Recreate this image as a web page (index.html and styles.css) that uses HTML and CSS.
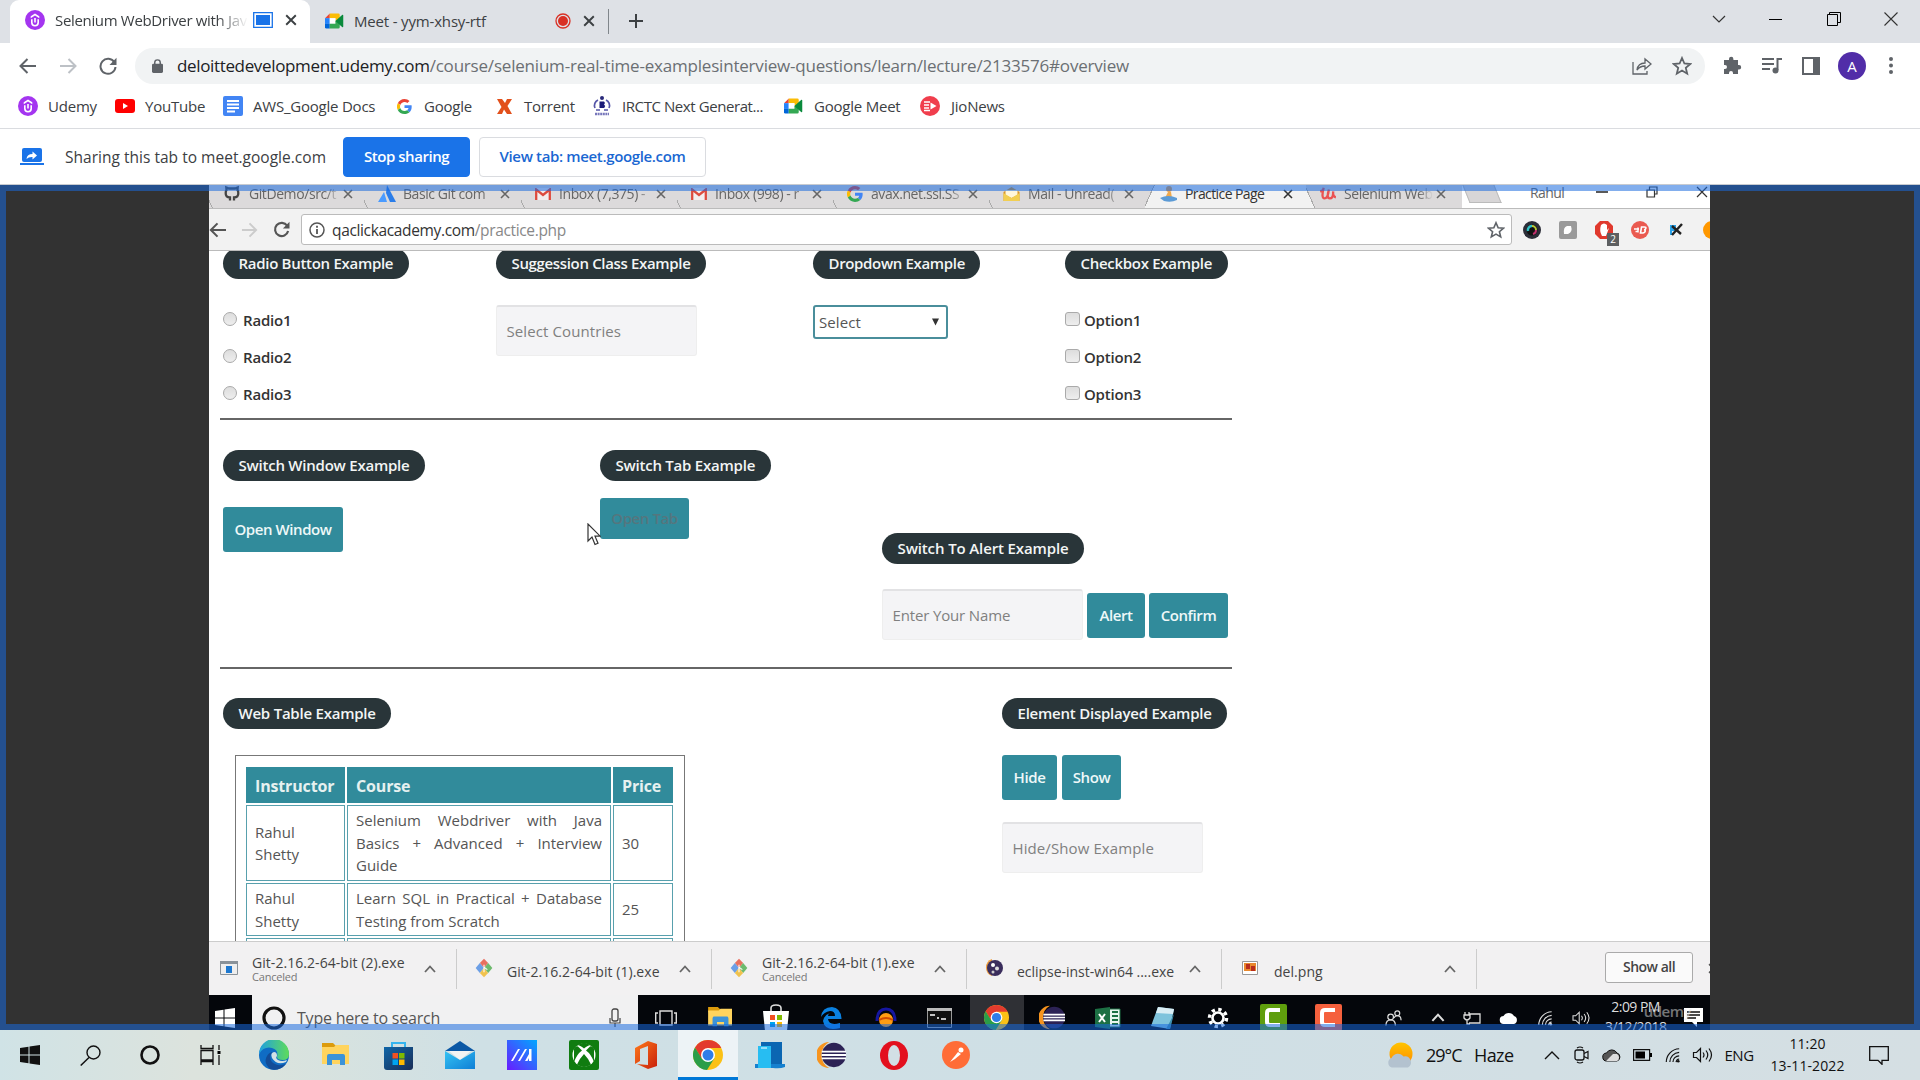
FILE: index.html
```html
<!DOCTYPE html>
<html lang="en">
<head>
<meta charset="utf-8">
<title>Selenium WebDriver with Java</title>
<link rel="stylesheet" href="styles.css">
</head>
<body>
<svg width="0" height="0" class="defs">
  <defs>
    <linearGradient id="gMail" x1="0" y1="0" x2="1" y2="1"><stop offset="0" stop-color="#35c3f3"/><stop offset="1" stop-color="#0f7fd6"/></linearGradient>
    <linearGradient id="gMy" x1="0" y1="1" x2="1" y2="0"><stop offset="0" stop-color="#6a1bff"/><stop offset="1" stop-color="#00a8ff"/></linearGradient>
    <linearGradient id="gEdge" x1="0" y1="0" x2="1" y2="0"><stop offset="0" stop-color="#1f9fe0"/><stop offset="1" stop-color="#5fdc5a"/></linearGradient>
    <linearGradient id="gStore" x1="0" y1="0" x2="1" y2="1"><stop offset="0" stop-color="#0f66a8"/><stop offset="1" stop-color="#1a2d56"/></linearGradient>
    <linearGradient id="gOff" x1="0" y1="0" x2="1" y2="1"><stop offset="0" stop-color="#ff7a1a"/><stop offset="1" stop-color="#c8200c"/></linearGradient>
    <linearGradient id="gSun" x1="0" y1="0" x2="0" y2="1"><stop offset="0" stop-color="#ffc400"/><stop offset="1" stop-color="#ff8a00"/></linearGradient>
  </defs>
  <symbol id="udemy" viewBox="0 0 20 20"><circle cx="10" cy="10" r="10" fill="#a435f0"/><path d="M5.700 6.200 10 3.500l4.300 2.700v2L10 5.600 5.700 8.200z" fill="#fff"/><path d="M6.800 9.200v3.300a3.200 3.200 0 0 0 6.400 0V9.200M10 8v4.500" fill="none" stroke="#fff" stroke-width="1.600"/></symbol>
  <symbol id="meet" viewBox="0 0 20 16"><path d="M0 5 5 0v5z" fill="#ea4335"/><path d="M5 0h9a1.500 1.500 0 0 1 1.500 1.500V6L11 8V5H5z" fill="#fbbc04"/><path d="M0 5h5v6H0z" fill="#2684fc"/><path d="M0 11h5v5H1.500A1.500 1.500 0 0 1 0 14.500z" fill="#0066da"/><path d="M5 5h6v6H5z" fill="#fff"/><path d="M5 11h6V8l4.500-2v8.500A1.500 1.500 0 0 1 14 16H5z" fill="#34a853"/><path d="M11 8l7-6.300c.5-.4 1.200-.2 1.200.5v11.600c0 .7-.7.9-1.200.5z" fill="#0a8a3c"/></symbol>
  <symbol id="cross" viewBox="0 0 10 10"><path d="M1 1l8 8M9 1 1 9" fill="none" stroke="currentColor" stroke-width="1.600"/></symbol>
  <symbol id="up" viewBox="0 0 12 8"><path d="M1 7l5-5.500L11 7" fill="none" stroke="currentColor" stroke-width="1.800"/></symbol>
  <symbol id="g" viewBox="0 0 48 48"><path fill="#EA4335" d="M24 9.500c3.500 0 6.700 1.200 9.200 3.600l6.900-6.900C35.900 2.400 30.500 0 24 0 14.600 0 6.500 5.400 2.600 13.200l8 6.200C12.400 13.700 17.700 9.500 24 9.500z"/><path fill="#4285F4" d="M47 24.600c0-1.600-.2-3.100-.4-4.600H24v9h12.900c-.6 3-2.300 5.500-4.800 7.200l7.700 6C44.400 38 47 32 47 24.600z"/><path fill="#FBBC05" d="M10.500 28.600a14.500 14.500 0 0 1 0-9.200l-8-6.200a24 24 0 0 0 0 21.600z"/><path fill="#34A853" d="M24 48c6.500 0 11.900-2.100 15.900-5.800l-7.700-6c-2.200 1.500-4.900 2.300-8.200 2.300-6.300 0-11.600-4.200-13.500-9.900l-8 6.200C6.500 42.600 14.600 48 24 48z"/></symbol>
  <symbol id="gmail" viewBox="0 0 16 12"><path d="M0 0h16v12H0z" fill="#f3eeee"/><path d="M1.200 12V1.500L8 7l6.800-5.500V12" fill="none" stroke="#dd4b3e" stroke-width="2.300"/></symbol>
  <symbol id="star" viewBox="0 0 20 20"><path d="M10 2l2.400 5.500 5.900.5-4.500 3.900 1.400 5.800L10 14.600l-5.200 3.100 1.400-5.800L1.700 8l5.900-.5z" fill="none" stroke="#5f6368" stroke-width="1.800"/></symbol>
  <symbol id="chrome" viewBox="0 0 30 30"><circle cx="15" cy="15" r="15" fill="#fbc116"/><path d="M15 0A15 15 0 0 0 2 7.500l6.500 11.200L15 8h13.300A15 15 0 0 0 15 0z" fill="#e33b2e"/><path d="M2 7.500A15 15 0 0 0 14 30l7.500-12L9 19z" fill="#2a9d48"/><circle cx="15" cy="15" r="7" fill="#fff"/><circle cx="15" cy="15" r="5.500" fill="#2f7de9"/></symbol>
  <symbol id="folder" viewBox="0 0 28 26"><path d="M0 1h11l3 3-2 3H0z" fill="#dc9b0c"/><path d="M0 5h12l2-2h13v19H0z" fill="#ffd45e"/><path d="M5 23v-9a2 2 0 0 1 2-2h14a2 2 0 0 1 2 2v9h-5v-5h-8v5z" fill="#3c93d8"/></symbol>
  <symbol id="eclipse" viewBox="0 0 30 30"><path d="M12 1a14 14 0 0 0 0 28A16 16 0 0 1 12 1z" fill="#f7941e"/><circle cx="17" cy="15" r="13" fill="#2c2255"/><path d="M4 11.500h26M4 15h26M4 18.500h26" stroke="#fff" stroke-width="1.900"/></symbol>
  <symbol id="win" viewBox="0 0 20 20"><path d="M0 3l8.500-1.200v7.700H0zM9.500 1.600 20 0v9.500H9.500zM0 10.500h8.500v7.700L0 17zM9.500 10.500H20V20L9.500 18.400z" fill="currentColor"/></symbol>
  <symbol id="wifi" viewBox="0 0 18 18"><path d="M2 17A15 15 0 0 1 16.500 2M6 17A11 11 0 0 1 16.500 6M9.500 17a7 7 0 0 1 7-7M13 17a4 4 0 0 1 3.500-3.500" fill="none" stroke="currentColor" stroke-width="1.300"/><circle cx="15.500" cy="16" r="1.500" fill="currentColor"/></symbol>
  <symbol id="vol" viewBox="0 0 20 18"><path d="M1 6.500h3l4-4v13l-4-4H1zM10.500 6.500q2 2.500 0 5M13.500 4.500q3.500 4.500 0 9M16.500 2.500q5 6.500 0 13" fill="none" stroke="currentColor" stroke-width="1.200"/></symbol>
  <symbol id="cloud" viewBox="0 0 20 14"><path d="M5 13a4 4 0 0 1-.5-8A6 6 0 0 1 15 5a4.200 4.200 0 0 1 0 8z" fill="currentColor"/></symbol>
  <symbol id="git" viewBox="0 0 20 24"><path d="M10 1l5 5-5 6-5-6z" fill="#e8705f"/><path d="M5 6l5 6-5 6-5-6z" fill="#6c9fe6"/><path d="M15 6l5 6-5 6-5-6z" fill="#6dba6d"/><path d="M10 12l5 6-5 5-5-5z" fill="#f0c24e"/><path d="M10 8v9M10 11l4 3" stroke="#fff" stroke-width="1.300"/></symbol>
  <symbol id="rec" viewBox="0 0 16 16"><circle cx="8" cy="8" r="7" fill="none" stroke="#d93025" stroke-width="1.300"/><circle cx="8" cy="8" r="5" fill="#d93025"/></symbol>
  <symbol id="people" viewBox="0 0 18 18"><circle cx="6" cy="8" r="3" fill="none" stroke="currentColor" stroke-width="1.300"/><circle cx="13" cy="4" r="2.600" fill="none" stroke="currentColor" stroke-width="1.300"/><path d="M1 17q0-6 5-6t5 6M9.500 9q1-2.500 3.500-2.500 4 0 4 5" fill="none" stroke="currentColor" stroke-width="1.300"/></symbol>
</svg>

<header class="tabstrip">
  <div class="tab active">
    <svg width="20" height="20"><use href="#udemy"/></svg>
    <span class="tab-title fade">Selenium WebDriver with Jav</span>
    <svg class="share-dot" width="20" height="16" viewBox="0 0 20 16"><path d="M.7.7h18.600v14.600H.7z" fill="#fff" stroke="#1a73e8" stroke-width="1.300"/><path d="M3 3h14v10H3z" fill="#1a73e8"/></svg>
    <svg class="x" width="12" height="12"><use href="#cross"/></svg>
  </div>
  <div class="tab">
    <svg width="19" height="16"><use href="#meet"/></svg>
    <span class="tab-title">Meet - yym-xhsy-rtf</span>
    <svg width="16" height="16"><use href="#rec"/></svg>
    <svg class="x" width="12" height="12"><use href="#cross"/></svg>
  </div>
  <svg class="plus" width="16" height="16" viewBox="0 0 16 16"><path d="M8 1v14M1 8h14" stroke="#3c4043" stroke-width="2"/></svg>
  <div class="winctl">
    <svg width="14" height="8" viewBox="0 0 14 8"><path d="M1 1l6 6 6-6" fill="none" stroke="#333" stroke-width="1.200"/></svg>
    <svg width="14" height="14" viewBox="0 0 14 14"><path d="M0 7.500h13" stroke="#000"/></svg>
    <svg width="14" height="14" viewBox="0 0 14 14"><path d="M.5 2.500h10v11H.5zM2.500 2.500v-2h11v10h-3" fill="none" stroke="#000"/></svg>
    <svg width="14" height="14" viewBox="0 0 14 14"><path d="M.5.5l13 13M13.500.5l-13 13" stroke="#333" stroke-width="1.100"/></svg>
  </div>
</header>

<nav class="toolbar">
  <svg width="18" height="16" viewBox="0 0 18 16"><path d="M17 8H2M8.500 1 1.500 8l7 7" fill="none" stroke="#5f6368" stroke-width="2"/></svg>
  <svg width="18" height="16" viewBox="0 0 18 16"><path d="M1 8h15M9.500 1l7 7-7 7" fill="none" stroke="#bdc1c6" stroke-width="2"/></svg>
  <svg width="18" height="18" viewBox="0 0 18 18"><path d="M15.500 5.500A7.500 7.500 0 1 0 16.500 10" fill="none" stroke="#5f6368" stroke-width="2"/><path d="M17.500.8V8h-7z" fill="#5f6368"/></svg>
  <div class="omnibox">
    <svg width="11" height="14" viewBox="0 0 12 15"><rect y="5" width="12" height="10" rx="1.500" fill="#5f6368"/><path d="M3 6V3.800a3 3 0 0 1 6 0V6" fill="none" stroke="#5f6368" stroke-width="1.600"/></svg>
    <span class="url"><b>deloittedevelopment.udemy.com</b><i>/course/selenium-real-time-examplesinterview-questions/learn/lecture/2133576#overview</i></span>
    <svg width="20" height="18" viewBox="0 0 20 18"><path d="M1 5v12h14v-3M5 13q1-7 8-7V2l6 5-6 5V9q-5 0-8 4z" fill="none" stroke="#5f6368" stroke-width="1.300"/></svg>
    <svg width="20" height="20"><use href="#star"/></svg>
  </div>
  <div class="actions">
    <svg width="19" height="19" viewBox="0 0 19 19"><path d="M1 4h5V3a2.200 2.200 0 0 1 4.400 0v1H15v5h1a2.200 2.200 0 0 1 0 4.400h-1V18h-5v-1a2 2 0 0 0-4 0v1H1v-5h1a2 2 0 0 0 0-4H1z" fill="#5f6368"/></svg>
    <svg width="20" height="17" viewBox="0 0 20 17"><path d="M0 2h12M0 7h12M0 12h8" stroke="#5f6368" stroke-width="2"/><path d="M15.500 13V2H20" fill="none" stroke="#5f6368" stroke-width="2"/><circle cx="13.500" cy="13.500" r="3" fill="#5f6368"/></svg>
    <svg width="18" height="18" viewBox="0 0 18 18"><path d="M1 1h16v16H1z" fill="#fff" stroke="#5f6368" stroke-width="2"/><path d="M11 1h6v16h-6z" fill="#5f6368"/></svg>
    <span class="avatar">A</span>
    <svg width="4" height="17" viewBox="0 0 4 17"><circle cx="2" cy="2" r="2" fill="#5f6368"/><circle cx="2" cy="8.500" r="2" fill="#5f6368"/><circle cx="2" cy="15" r="2" fill="#5f6368"/></svg>
  </div>
</nav>

<nav class="bookmarks">
  <a class="bm b1"><svg width="20" height="20"><use href="#udemy"/></svg>Udemy</a>
  <a class="bm b2"><svg width="20" height="14" viewBox="0 0 20 14"><rect width="20" height="14" rx="3" fill="#f00"/><path d="M8 4l5 3-5 3z" fill="#fff"/></svg>YouTube</a>
  <a class="bm b3"><svg width="20" height="20" viewBox="0 0 20 20"><rect width="20" height="20" rx="2" fill="#4285f4"/><path d="M4 5h12M4 8.500h12M4 12h12M4 15.500h8" stroke="#fff" stroke-width="1.800"/></svg>AWS_Google Docs</a>
  <a class="bm b4"><svg width="15" height="15"><use href="#g"/></svg>Google</a>
  <a class="bm b5"><svg width="15" height="15" viewBox="0 0 15 15"><path d="M0 0h5l3 4 2-4h5l-4.500 7L15 15h-5l-3-4.500L5 15H0l4.500-7z" fill="#e2501b"/></svg>Torrent</a>
  <a class="bm b6"><svg width="18" height="20" viewBox="0 0 18 20"><circle cx="9" cy="2" r="2" fill="#2a2a7a"/><path d="M5 4a6 6 0 0 0-3 8M13 4a6 6 0 0 1 3 8M3 14h4M11 14h4" fill="none" stroke="#5555a8" stroke-width="1.700"/><path d="M6.500 5.500h4.500l1 1.500-1 1.500 1.200 1.500-1 2H6.500z" fill="#1b1b78"/><path d="M2 18h14" stroke="#7777bb" stroke-width="2.600" stroke-dasharray="2 .6"/></svg>IRCTC Next Generat...</a>
  <a class="bm b7"><svg width="19" height="16"><use href="#meet"/></svg>Google Meet</a>
  <a class="bm b8"><svg width="20" height="20" viewBox="0 0 20 20"><circle cx="10" cy="10" r="10" fill="#f03e4d"/><path d="M4 6h6M4 9h5M4 12h5M4 14.500h6" stroke="#fff" stroke-width="1.500"/><path d="M10.500 6.500l6 3.500-6 3.500z" fill="#fff"/></svg>JioNews</a>
</nav>

<section class="infobar">
  <svg width="24" height="17" viewBox="0 0 24 17"><rect x="2" width="20" height="14" rx="2" fill="#1a73e8"/><path d="M0 15h24v2H0z" fill="#1a73e8"/><path d="M6.500 11q.5-5 6-5V3.500L17 7.500l-4.500 4V9q-4-.2-6 2z" fill="#fff"/></svg>
  <span class="share-text">Sharing this tab to meet.google.com</span>
  <span class="btn stop">Stop sharing</span>
  <span class="btn view">View tab: meet.google.com</span>
</section>

<main class="stage">
  <div class="video">
    <div class="vtabs">
      <div class="vtab t1"><svg width="18" height="18" viewBox="0 0 18 18"><path d="M7 15.500v-3q-4.500 0-4.300-4.500 0-2 .8-3L3.300 2.500l2.700 1h6l2.700-1-.2 2.500q.8 1 .8 3 .2 4.500-4.300 4.500v3" fill="none" stroke="#444" stroke-width="2.300"/></svg><span class="fade">GitDemo/src/t</span><svg width="10" height="10"><use href="#cross"/></svg></div>
      <div class="vtab t2"><svg width="18" height="18" viewBox="0 0 18 18"><path d="M9 0 18 17h-6L8 8z" fill="#2b7de9"/><path d="M6 7l3 10H0z" fill="#4a9bff"/></svg><span class="fade">Basic Git com</span><svg width="10" height="10"><use href="#cross"/></svg></div>
      <div class="vtab t3"><svg width="16" height="12"><use href="#gmail"/></svg><span class="fade">Inbox (7,375) -</span><svg width="10" height="10"><use href="#cross"/></svg></div>
      <div class="vtab t4"><svg width="16" height="12"><use href="#gmail"/></svg><span class="fade">Inbox (998) - r</span><svg width="10" height="10"><use href="#cross"/></svg></div>
      <div class="vtab t5"><svg width="16" height="16"><use href="#g"/></svg><span class="fade">avax.net.ssl.SS</span><svg width="10" height="10"><use href="#cross"/></svg></div>
      <div class="vtab t6"><svg width="17" height="16" viewBox="0 0 16 16"><path d="M0 6l8-5 8 5v9H0z" fill="#d9952a"/><path d="M2 4h12v5l-6 3-6-3z" fill="#fff7dc"/><path d="M0 7l8 5 8-5v8H0z" fill="#f2cf52"/></svg><span class="fade">Mail - Unread(</span><svg width="10" height="10"><use href="#cross"/></svg></div>
      <div class="vtab t7 on"><svg width="18" height="18" viewBox="0 0 18 18"><circle cx="9" cy="4" r="3" fill="#e8a04e"/><path d="M8 7h3l1 6H5z" fill="#efa94d"/><path d="M0 13q8-4 17 0v2q-6 3-13 1z" fill="#5c9bd6"/></svg><span>Practice Page</span><svg width="10" height="10"><use href="#cross"/></svg></div>
      <div class="vtab t8"><svg width="16" height="14" viewBox="0 0 18 16"><path d="M0 5q4-1 4-4-3 12 1 12t5-10q-3 10 1 10t4-8q-1 6 3 7" fill="none" stroke="#ea5252" stroke-width="2.600"/></svg><span class="fade">Selenium Web</span><svg width="10" height="10"><use href="#cross"/></svg></div>
      <div class="newtab"></div>
      <span class="user">Rahul</span>
      <div class="vwin">
        <svg width="12" height="12" viewBox="0 0 12 12"><path d="M0 6h12" stroke="#222" stroke-width="1.500"/></svg>
        <svg width="12" height="12" viewBox="0 0 12 12"><path d="M1 4h7.500v7H1zM3.500 4V1H11v7H8.500" fill="none" stroke="#333" stroke-width="1.200"/></svg>
        <svg width="12" height="12" viewBox="0 0 12 12"><path d="M1 1l10 10M11 1 1 11" stroke="#333" stroke-width="1.200"/></svg>
      </div>
    </div>
    <div class="vbar">
      <svg width="17" height="16" viewBox="0 0 18 16"><path d="M18 8H3M9 1 2 8l7 7" fill="none" stroke="#555" stroke-width="2.200"/></svg>
      <svg width="17" height="16" viewBox="0 0 18 16"><path d="M1 8h14M9 1l7 7-7 7" fill="none" stroke="#ccc" stroke-width="2"/></svg>
      <svg width="17" height="17" viewBox="0 0 18 18"><path d="M15 5A7 7 0 1 0 16 10.500" fill="none" stroke="#555" stroke-width="2.300"/><path d="M17.500.8V8h-7z" fill="#555"/></svg>
      <div class="vurl">
        <svg width="16" height="16" viewBox="0 0 16 16"><circle cx="8" cy="8" r="7" fill="none" stroke="#555" stroke-width="1.500"/><path d="M8 7v5M8 3.800v2" stroke="#555" stroke-width="1.800"/></svg>
        <span>qaclickacademy.com<i>/practice.php</i></span>
        <svg width="18" height="18"><use href="#star"/></svg>
      </div>
      <div class="exts">
        <svg width="18" height="18" viewBox="0 0 18 18"><circle cx="9" cy="9" r="9" fill="#2b2d38"/><circle cx="9" cy="9" r="5.500" fill="#111"/><path d="M5 10a4 4 0 0 1 4-5" stroke="#2fc4c9" stroke-width="2.500" fill="none"/><path d="M9 5a4 4 0 0 1 4 4" stroke="#b9c93a" stroke-width="2" fill="none"/><path d="M13 9a4 4 0 0 1-3 4" stroke="#c2306e" stroke-width="2" fill="none"/></svg>
        <svg width="18" height="18" viewBox="0 0 18 18"><rect width="18" height="18" rx="2" fill="#9a9a9a"/><path d="M5 13q-1-7 3-8h4q2 6-3 8z" fill="#fff"/></svg>
        <span class="ext"><svg width="18" height="18" viewBox="0 0 18 18"><path d="M5 0h8l5 5v8l-5 5H5l-5-5V5z" fill="#e0392d"/><path d="M6 4q3-3 6 0v5l2-2-3 8H7q-3-5-1-11z" fill="#fff"/></svg><em>2</em></span>
        <svg width="18" height="18" viewBox="0 0 18 18"><circle cx="9" cy="9" r="9" fill="#ea5a50"/><path d="M3 8h5M4.500 10.500h3M7 6.500v5" fill="none" stroke="#fff" stroke-width="1.500"/><path d="M10.500 6h3q1.800 0 1.300 1.500-.4 1.300-1.800 1.300 1.500.2 1.200 1.500T12 12H9.500z" fill="none" stroke="#fff" stroke-width="1.600"/></svg>
        <svg width="14" height="14" viewBox="0 0 14 14"><path d="M1 2h6v6H3v4H1z" fill="#29a3ea"/><path d="M3 3l9 8M13 1 3 12" stroke="#222" stroke-width="2.400"/></svg>
        <svg width="18" height="18" viewBox="0 0 18 18"><circle cx="9" cy="9" r="9" fill="#ff9800"/></svg>
      </div>
    </div>

    <div class="page">
      <section class="examples">
        <div><h3 class="pill">Radio Button Example</h3>
          <label class="opt"><s class="radio"></s>Radio1</label><label class="opt"><s class="radio"></s>Radio2</label><label class="opt"><s class="radio"></s>Radio3</label></div>
        <div><h3 class="pill">Suggession Class Example</h3><div class="field">Select Countries</div></div>
        <div><h3 class="pill">Dropdown Example</h3><div class="select">Select<svg width="7" height="8" viewBox="0 0 8 8"><path d="M0 0h8L4 8z" fill="#333"/></svg></div></div>
        <div><h3 class="pill">Checkbox Example</h3>
          <label class="opt"><s class="check"></s>Option1</label><label class="opt"><s class="check"></s>Option2</label><label class="opt"><s class="check"></s>Option3</label></div>
      </section>
      <hr>
      <section class="switches">
        <div><h3 class="pill">Switch Window Example</h3><span class="tbtn w120">Open Window</span></div>
        <div><h3 class="pill">Switch Tab Example</h3><span class="tbtn link">Open Tab</span></div>
        <div class="alerts"><h3 class="pill">Switch To Alert Example</h3>
          <div class="row"><div class="field">Enter Your Name</div><span class="tbtn w58">Alert</span><span class="tbtn w79">Confirm</span></div></div>
      </section>
      <hr>
      <section class="tables">
        <div><h3 class="pill">Web Table Example</h3>
          <div class="tbl">
            <b>Instructor</b><b>Course</b><b>Price</b>
            <span class="c">Rahul<br>Shetty</span><span class="c"><u>Selenium Webdriver with Java</u><u>Basics + Advanced + Interview</u>Guide</span><span class="c">30</span>
            <span class="c">Rahul<br>Shetty</span><span class="c"><u>Learn SQL in Practical + Database</u>Testing from Scratch</span><span class="c">25</span>
            <span class="c"></span><span class="c"></span><span class="c"></span>
          </div></div>
        <div><h3 class="pill">Element Displayed Example</h3>
          <div class="row hs"><span class="tbtn w56">Hide</span><span class="tbtn w59">Show</span></div>
          <div class="field">Hide/Show Example</div></div>
      </section>
      <svg class="cursor" width="14" height="23" viewBox="0 0 14 23"><path d="M1 1v17l4-4 3 7.500 3-1.300-3-7h5.200z" fill="#fff" stroke="#333" stroke-width="1.200"/></svg>
    </div>

    <div class="downloads">
      <div class="dl"><svg width="18" height="14" viewBox="0 0 18 14"><path d="M.5.5h17v13H.5z" fill="#eee" stroke="#8a9299"/><path d="M0 0h18v3H0z" fill="#8a9299"/><path d="M6 5h6v7H6z" fill="#1d78d0"/></svg><span>Git-2.16.2-64-bit (2).exe<small>Canceled</small></span><svg width="12" height="8"><use href="#up"/></svg></div>
      <div class="dl"><svg width="18" height="20"><use href="#git"/></svg><span class="low">Git-2.16.2-64-bit (1).exe</span><svg width="12" height="8"><use href="#up"/></svg></div>
      <div class="dl"><svg width="18" height="20"><use href="#git"/></svg><span>Git-2.16.2-64-bit (1).exe<small>Canceled</small></span><svg width="12" height="8"><use href="#up"/></svg></div>
      <div class="dl"><svg width="18" height="18" viewBox="0 0 18 18"><path d="M7 0a9 9 0 0 0 0 17z" fill="#f0a040"/><circle cx="10" cy="9" r="8" fill="#3a2d5c"/><circle cx="8" cy="6" r="2" fill="#fff"/><circle cx="12" cy="9.500" r="2" fill="#ddd"/><circle cx="8" cy="13" r="1.500" fill="#ccc"/></svg><span class="low">eclipse-inst-win64 ....exe</span><svg width="12" height="8"><use href="#up"/></svg></div>
      <div class="dl"><svg width="16" height="14" viewBox="0 0 16 14"><path d="M.5.5h15v13H.5z" fill="#fff" stroke="#999"/><path d="M2 2h12v8H2z" fill="#e9882c"/><path d="M4 3h4v5H4zM9 5h4v5H9z" fill="#b82d1d"/></svg><span class="low">del.png</span><svg width="12" height="8"><use href="#up"/></svg></div>
      <span class="showall">Show all</span>
      <svg class="dlx" width="11" height="11"><use href="#cross"/></svg>
    </div>

    <div class="vtask">
      <div class="vs"><svg width="20" height="20"><use href="#win"/></svg></div>
      <div class="search"><svg width="24" height="24" viewBox="0 0 24 24"><circle cx="12" cy="12" r="10" fill="none" stroke="#111" stroke-width="3.200"/></svg><span>Type here to search</span><svg width="12" height="19" viewBox="0 0 12 19"><rect x="3" y="1" width="6" height="12" rx="2" fill="none" stroke="#444" stroke-width="1.300"/><path d="M1 10v5h10v-5M6 15v4" fill="none" stroke="#444" stroke-width="1.200"/></svg></div>
      <div class="vi"><svg width="22" height="16" viewBox="0 0 22 16"><path d="M5 1h12v14H5zM3 3H.7v10H3M19 3h2.300v10H19" fill="none" stroke="#ddd" stroke-width="1.400"/></svg></div>
      <div class="vi"><svg width="25" height="23"><use href="#folder"/></svg></div>
      <div class="vi"><svg width="26" height="27" viewBox="0 0 26 27"><path d="M8 8V4q0-3 5-3t5 3v4" fill="none" stroke="#ddd" stroke-width="1.600"/><path d="M0 7h26l-2 20H2z" fill="#fff"/><path d="M7 11h5v5H7z" fill="#f25022"/><path d="M14 11h5v5h-5z" fill="#7fba00"/><path d="M7 18h5v5H7z" fill="#00a4ef"/><path d="M14 18h5v5h-5z" fill="#ffb900"/></svg></div>
      <div class="vi"><svg width="22" height="24" viewBox="0 0 22 24"><path d="M1 11Q2 1 12 1q9 1 9.500 12H8q1 7 12 4v5Q5 26 3 15q1-6 7-8-2 1-2 3h7q0-5-5-5Q4 6 1 11z" fill="#0a80e0"/></svg></div>
      <div class="vi"><svg width="22" height="22" viewBox="0 0 22 22"><path d="M2 14q0-12 9-12t9 12" fill="none" stroke="#1616a0" stroke-width="3"/><circle cx="11" cy="13" r="7" fill="#ff9c12"/><path d="M4 13q7-4 14 0" stroke="#d04a00" fill="none" stroke-width="2"/></svg></div>
      <div class="vi"><svg width="25" height="20" viewBox="0 0 25 20"><path d="M.5.5h24v19H.5z" fill="#111" stroke="#999"/><path d="M0 0h25v3H0z" fill="#bbb"/><path d="M3 7h5M10 10l2 0M14 11h5" stroke="#fff" stroke-width="1.500"/></svg></div>
      <div class="vi hot"><svg width="25" height="25"><use href="#chrome"/></svg></div>
      <div class="vi"><svg width="27" height="25"><use href="#eclipse"/></svg></div>
      <div class="vi"><svg width="26" height="22" viewBox="0 0 26 22"><path d="M12 2h13v18H12z" fill="#e9f5ee" stroke="#1d7044"/><path d="M17 5h6M17 9h6M17 13h6M17 17h6" stroke="#1d7044" stroke-width="2"/><path d="M0 2 15 0v22L0 20z" fill="#1d7044"/><path d="M4 7l6 8M10 7l-6 8" stroke="#fff" stroke-width="2"/></svg></div>
      <div class="vi"><svg width="24" height="24" viewBox="0 0 24 24"><path d="M7 1l16 2-4 20L0 20z" fill="#7ec3dc"/><path d="M7 1l16 2-1 5L5 7z" fill="#d9edf4"/><path d="M15 23l8-15-4 15z" fill="#3d8fb0"/></svg></div>
      <div class="vi"><svg width="22" height="22" viewBox="0 0 22 22"><circle cx="11" cy="11" r="5.500" fill="none" stroke="#fff" stroke-width="2.600"/><circle cx="11" cy="11" r="8.500" fill="none" stroke="#fff" stroke-width="3.500" stroke-dasharray="3.300 3.375"/></svg></div>
      <div class="vi"><svg width="27" height="27" viewBox="0 0 27 27"><rect width="27" height="27" rx="2" fill="#5f9e0d"/><path d="M20 6H10q-3 0-3 3v9q0 3 3 3h10" fill="none" stroke="#fff" stroke-width="4"/></svg></div>
      <div class="vi"><svg width="27" height="27" viewBox="0 0 27 27"><rect width="27" height="27" rx="2" fill="#f5603d"/><path d="M20 6H10q-3 0-3 3v9q0 3 3 3h10" fill="none" stroke="#fff" stroke-width="4"/></svg></div>
      <div class="vtray">
        <svg width="17" height="18"><use href="#people"/></svg>
        <svg width="14" height="9"><use href="#up"/></svg>
        <svg width="18" height="14" viewBox="0 0 18 14"><path d="M6 3h11v9H6M2 1v3h4V1M1 4h6v3q-3 4-6 0zM4 9v4h3" fill="none" stroke="currentColor" stroke-width="1.300"/></svg>
        <svg class="white" width="20" height="14"><use href="#cloud"/></svg>
        <svg width="16" height="16"><use href="#wifi"/></svg>
        <svg width="20" height="16"><use href="#vol"/></svg>
        <span class="vclock">2:09 PM<br>3/12/2018</span>
        <svg width="19" height="19" viewBox="0 0 19 19"><path d="M0 0h19v14h-6v5l-5-5H0z" fill="#fff"/><path d="M3 4h13M3 7h13M3 10h9" stroke="#111" stroke-width="1.300"/></svg>
        <span class="mark">udemy</span>
      </div>
    </div>
  </div>
  <div class="outline"></div>
</main>

<footer class="taskbar">
  <div class="ti"><svg width="20" height="20"><use href="#win"/></svg></div>
  <div class="ti"><svg width="21" height="21" viewBox="0 0 21 21"><circle cx="13.500" cy="7.500" r="6.500" fill="none" stroke="#111" stroke-width="1.400"/><path d="M9 12.500.7 20.500" stroke="#111" stroke-width="1.500"/></svg></div>
  <div class="ti"><svg width="20" height="20" viewBox="0 0 20 20"><circle cx="10" cy="10" r="8.500" fill="none" stroke="#111" stroke-width="2.600"/></svg></div>
  <div class="ti"><svg width="21" height="20" viewBox="0 0 21 20"><path d="M1 5.500h12v9.500H1zM1 0v3.500h12V0M1 20v-3.500h12V20M19 0v5M19 10v10" fill="none" stroke="#111" stroke-width="1.300"/><path d="M17.500 6h3v3h-3z"/></svg></div>
  <div class="ti"><svg width="30" height="30" viewBox="0 0 30 30"><circle cx="15" cy="15" r="15" fill="#0f6cc4"/><path d="M0 14A15 15 0 0 1 30 14q0 6-6 6-6 0-6-3 2-7-5-9Q5 6 0 14z" fill="url(#gEdge)"/><path d="M12 14q-2 4 1 8 5 5 14 2Q20 32 11 29 4 22 8 16q2-4 7-4-2 0-3 2z" fill="#124c98"/><path d="M28 20q-5 2-9 0-3-2-1-4 0-4-3-4-4 1-2 6 5 8 14 4z" fill="#d2e0e5"/></svg></div>
  <div class="ti"><svg width="28" height="26"><use href="#folder"/></svg></div>
  <div class="ti"><svg width="29" height="29" viewBox="0 0 29 29"><path d="M8 7V2h13v5" fill="none" stroke="#35b5ef" stroke-width="2"/><path d="M0 6h29v20q0 3-3 3H3q-3 0-3-3z" fill="url(#gStore)"/><path d="M8.500 12H14v5.500H8.500z" fill="#f25022"/><path d="M15 12h5.500v5.500H15z" fill="#7fba00"/><path d="M8.500 18.500H14V24H8.500z" fill="#00a4ef"/><path d="M15 18.500h5.500V24H15z" fill="#ffb900"/></svg></div>
  <div class="ti"><svg width="30" height="28" viewBox="0 0 30 28"><path d="M0 10 15 0l15 10z" fill="#0b58a5"/><path d="M4 10h22l-11 9z" fill="#f3f3f3"/><path d="M0 10l15 9 15-9v18H0z" fill="url(#gMail)"/></svg></div>
  <div class="ti"><svg width="30" height="30" viewBox="0 0 30 30"><path d="M0 0h30v30H0z" fill="url(#gMy)"/><path d="M4 21 11 9h2L6 21zM11 21 18 9h2l-7 12zM18 21l4-7V9h2.500v12H22v-3l-1.500 3z" fill="#fff"/></svg></div>
  <div class="ti"><svg width="30" height="30" viewBox="0 0 30 30"><rect width="30" height="30" rx="2" fill="#107c10"/><circle cx="15" cy="15" r="11.500" fill="#fff"/><path d="M8 5q3 0 7 3.500Q19 5 22 5L15 2.500zM5 22Q8 14 13 10.500L9 6.500q-2-1-4 2M25 22q-3-8-8-11.500l4-4q2-1 4 2M8 24.500Q11 18 15 14q4 4 7 10.500-7 5-14 0z" fill="#107c10"/></svg></div>
  <div class="ti"><svg width="22" height="28" viewBox="0 0 22 28"><path d="M0 7 13 0l9 3v22l-9 3L2 23l11 1V5L5 8v12l-5 3z" fill="url(#gOff)"/></svg></div>
  <div class="ti open"><svg width="30" height="30"><use href="#chrome"/></svg></div>
  <div class="ti"><svg width="30" height="27" viewBox="0 0 30 27"><path d="M6 0h21v23H6z" fill="#0b66b2"/><path d="M0 22h30v3q-5 2-12 1H0z" fill="#1580cf"/><path d="M3 4h13v22H3z" fill="#27bdf2"/><path d="M6 6h6" stroke="#fff"/></svg></div>
  <div class="ti"><svg width="30" height="28"><use href="#eclipse"/></svg></div>
  <div class="ti"><svg width="28" height="29" viewBox="0 0 28 29"><ellipse cx="14" cy="14.500" rx="14" ry="14.500" fill="#e3101e"/><ellipse cx="14" cy="14.500" rx="6" ry="10.500" fill="#d2dfe5"/></svg></div>
  <div class="ti"><svg width="28" height="28" viewBox="0 0 28 28"><circle cx="14" cy="14" r="14" fill="#ff6c37"/><path d="M8 21l8-10 3 2-6 5z" fill="#fff"/><circle cx="19" cy="9" r="2.500" fill="#fff"/></svg></div>
  <div class="tray">
    <svg class="sun" width="27" height="26" viewBox="0 0 27 26"><circle cx="14" cy="12" r="11.500" fill="url(#gSun)"/><path d="M5 25.500a5 5 0 0 1-.5-9.500 7 7 0 0 1 12-1.500A6 6 0 0 1 21 25.500z" fill="#b3c2cf"/></svg>
    <span class="deg">29°C</span><span class="haze">Haze</span>
    <svg width="16" height="9" viewBox="0 0 16 9"><path d="M1 8l7-7 7 7" fill="none" stroke="#111" stroke-width="1.400"/></svg>
    <svg width="16" height="18" viewBox="0 0 16 18"><rect x="1" y="4" width="9" height="10" rx="2" fill="none" stroke="#111" stroke-width="1.300"/><path d="M10 7.500l4-2v7l-4-2M3 2q3-2 6 0M3 16q3 2 6 0" fill="none" stroke="#111" stroke-width="1.200"/></svg>
    <svg width="20" height="14" viewBox="0 0 20 14"><path d="M5 13a4 4 0 0 1-.5-8A6 6 0 0 1 15 5a4.200 4.200 0 0 1 0 8z" fill="#555" stroke="#111"/><path d="M4 13 11 6l4 0a4 4 0 0 1 0 7z" fill="#ddd"/></svg>
    <svg width="19" height="12" viewBox="0 0 19 12"><path d="M.6.6h16v10.800H.6z" fill="none" stroke="#111" stroke-width="1.200"/><path d="M2.500 2.500h9.500v7H2.500zM17 4h2v4h-2z"/></svg>
    <svg width="17" height="16"><use href="#wifi"/></svg>
    <svg width="21" height="18"><use href="#vol"/></svg>
    <span class="lang">ENG</span>
    <span class="clock">11:20<br>13-11-2022</span>
    <svg width="20" height="19" viewBox="0 0 20 19"><path d="M.7.7h18.600v13.600h-6.300v4l-4-4H.7z" fill="none" stroke="#111" stroke-width="1.300"/></svg>
  </div>
</footer>
</body>
</html>
```
FILE: styles.css
```css
* { box-sizing: border-box; }
body { margin: 0; width: 1920px; height: 1080px; overflow: hidden; font: 15px/20px "Open Sans", "Noto Sans", sans-serif; color: #3c4043; background: #fff; display: flex; flex-direction: column; }
svg { display: block; flex: none; }
i, em, s, u { font-style: normal; text-decoration: none; }
.defs { position: absolute; }
span, b, i { white-space: nowrap; }

/* browser chrome */
.tabstrip { height: 43px; flex: none; background: #dee1e6; display: flex; align-items: center; padding-left: 10px; }
.tab { width: 300px; height: 43px; display: flex; align-items: center; padding: 0 14px 3px 15px; letter-spacing: -.17px; }
.tab.active { background: #fff; border-radius: 9px 9px 0 0; padding-right: 13px; }
.tab.active .tab-title { letter-spacing: -.33px; margin-right: -3px; }
.tab-title { flex: 1; margin-left: 10px; overflow: hidden; }
.tab:not(.active) { width: 299px; border-right: 1.500px solid #80868b; height: 25px; padding: 0 13px 0 15px; margin-bottom: 1px; }
.tab .x { margin-left: 12px; color: #3c4043; }
.tab .share-dot { margin-left: 8px; }
.fade { -webkit-mask-image: linear-gradient(90deg, #000 84%, transparent); mask-image: linear-gradient(90deg, #000 84%, transparent); }
.plus { margin: 0 0 2px 19px; }
.winctl { margin-left: auto; display: flex; gap: 43.500px; align-items: center; padding: 0 22px 6px 0; }
.toolbar { height: 45px; flex: none; display: flex; align-items: center; padding-left: 19px; }
.toolbar > svg { margin-right: 22px; }
.toolbar > svg:nth-child(3) { margin-right: 18px; }
.omnibox { width: 1570px; height: 36px; flex: none; border-radius: 18px; background: #f1f3f4; display: flex; align-items: center; padding: 0 13px 0 17px; gap: 20px; }
.omnibox > svg:first-child { margin-right: -6px; }
.url { flex: 1; font-size: 17px; color: #6b6f73; letter-spacing: -.2px; }
.url b { font-weight: 400; color: #202124; letter-spacing: -.35px; }
.actions { flex: 1; display: flex; align-items: center; gap: 20px; padding-left: 18px; }
.avatar { width: 28px; height: 28px; border-radius: 50%; background: #512da8; color: #fff; text-align: center; line-height: 28px; margin: 0 3px 0 -2px; }
.bookmarks { height: 41px; flex: none; border-bottom: 1px solid #dadce0; display: grid; grid-template-columns: 97px 108px 173px 100px 97px 191px 136px 140px; padding: 0 0 4px 18px; align-items: center; letter-spacing: -.22px; }
.bm { display: flex; align-items: center; gap: 10px; white-space: nowrap; }
.b4, .b5 { gap: 12px; }
.b6 { letter-spacing: -.42px; gap: 11px; }
.b7, .b8 { gap: 11px; }
.bm.b4, .bm.b5 { margin-left: 1px; }
.infobar { height: 56px; flex: none; border-bottom: 1px solid #c8cbd0; display: flex; align-items: center; padding-left: 20px; }
.share-text { margin-left: 21px; width: 278px; font-size: 15.500px; letter-spacing: .02px; }
.btn { height: 40px; line-height: 37px; border: 1px solid #dadce0; border-radius: 4px; font-weight: 600; text-align: center; letter-spacing: -.45px; }
.stop { width: 127px; background: #1a73e8; border-color: #1a73e8; color: #fff; }
.view { width: 227px; margin-left: 9px; color: #1a67d2; letter-spacing: -.35px; }

/* shared tab */
.stage { height: 845px; flex: none; background: #323232; position: relative; padding-left: 209px; }
.outline { position: absolute; inset: 0; border: 6px solid rgba(24, 106, 222, .54); }
.video { width: 1501px; height: 845px; background: #fff; overflow: hidden; display: flex; flex-direction: column; }
.vtabs { height: 24px; flex: none; background: #fff; border-bottom: 1px solid #bbb; display: flex; align-items: center; font-size: 14px; color: #666; letter-spacing: -.42px; overflow: hidden; }
.vtab { width: 156px; height: 24px; flex: none; display: flex; align-items: center; padding: 0 11px 5px 14px; background: linear-gradient(66deg, transparent 0 3px, #aaa 3px 4px, transparent 4px), #dcdadb; }
.vtab span { flex: 1; margin-left: 8px; overflow: hidden; margin-right: 3px; }
.vtab.t1 { width: 155px; }
.vtab.t2 { width: 157px; }
.vtab.t2 span { margin-left: 7px; }
.vtab.t7 { background: linear-gradient(114deg, #dcdadb 0 8px, #aaa 8px 9px, transparent 9px), #f2f2f2; color: #333; letter-spacing: -.6px; width: 161px; padding-left: 15px; padding-right: 13px; }
.vtab.t7 span { margin-left: 7px; }
.vtab.t8 { width: 156px; padding: 0 16px 5px 14px; background: linear-gradient(66deg, #f2f2f2 0 8px, #aaa 8px 9px, transparent 9px), #dcdadb; }
.newtab { width: 32px; height: 18px; flex: none; background: #d8d6d7; transform: skewX(22deg); border: solid #bbb; border-width: 0 1px 1px; margin: -6px 0 0 4px; }
.user { width: 66px; flex: none; margin-left: 32px; color: #666; padding-bottom: 7px; letter-spacing: -.6px; }
.vwin { display: flex; flex: none; gap: 38px; padding-bottom: 9px; color: #333; }
.vbar { height: 42px; flex: none; background: #f2f2f2; border-bottom: 1.500px solid #bbb; display: flex; align-items: center; }
.vbar > svg { margin-right: 15px; }
.vbar > svg:nth-child(3) { margin-right: 14px; }
.vurl { width: 1211px; height: 31px; flex: none; margin-left: -3px; border: 1px solid #bbb; border-radius: 3px; background: #fff; display: flex; align-items: center; padding: 0 6px 0 7px; gap: 7px; font-size: 15.500px; letter-spacing: -.35px; color: #333; }
.vurl span { flex: 1; }
.vurl i { color: #888; }
.exts { display: flex; align-items: center; gap: 18px; margin-left: 11px; flex: none; }
.exts > :nth-child(5) { margin: 0 2px; }
.ext { position: relative; }
.ext em { position: absolute; left: 12px; top: 12px; width: 12px; height: 13px; background: #5d5f61; color: #fff; font-size: 10px; line-height: 12px; text-align: center; }

/* practice page */
.page { height: 690px; flex: none; overflow: hidden; position: relative; padding: 1px 0 0 14px; line-height: 22.500px; }
.page hr { margin: 0 0 0 -3px; width: 1012px; height: 2px; border: 0; background: #666; }
.pill { margin: 0; width: max-content; height: 31px; border-radius: 16px; background: #293539; color: #f3f5f5; font: 600 15px/31px "Open Sans", sans-serif; letter-spacing: -.23px; padding: 0 15.500px; white-space: nowrap; }
.examples { display: grid; grid-template-columns: 273px 317px 252px 1fr; margin-top: -4px; height: 170px; }
.examples .pill { margin-bottom: 26px; letter-spacing: -.29px; }
.examples > :nth-child(n+2):nth-child(-n+3) .pill { letter-spacing: -.34px; }
.opt { display: flex; align-items: center; height: 37px; font-weight: 600; color: #333; letter-spacing: -.2px; position: relative; top: -3px; }
.radio, .check { width: 14px; height: 14px; border: 1px solid #aaa; background: linear-gradient(#ddd, #eee); border-radius: 50%; margin: -4px 6px 0 0; }
.check { border-radius: 3px; width: 15px; margin-right: 4px; }
.field { width: 201px; height: 51px; background: #f4f4f6; border: 1px solid #eee; border-top: 2px solid #e2e2e4; border-radius: 3px; padding-left: 9.500px; line-height: 48px; color: #808080; white-space: nowrap; letter-spacing: .1px; }
.select { width: 135px; height: 34px; border: 2px solid #4a8e9b; border-radius: 3px; padding: 0 7px 0 4px; color: #555; display: flex; align-items: center; justify-content: space-between; letter-spacing: .1px; }
.tbtn { display: block; height: 45px; line-height: 44px; border-radius: 3px; background: #318b9b; color: #eef8f8; font-weight: 600; text-align: center; letter-spacing: -.42px; }
.w120 { width: 120px; }
.w58 { width: 58px; }
.w79 { width: 79px; }
.w56 { width: 55px; }
.w59 { width: 59px; }
.link { width: 89px; height: 41px; line-height: 40px; color: #55767e; }
.switches { display: grid; grid-template-columns: 377px 282px 1fr; height: 247px; padding-top: 30px; }
.switches .pill { margin-bottom: 26px; }
.switches > :nth-child(2) .pill { margin-bottom: 17px; }
.alerts { padding-top: 83px; }
.switches .alerts .pill { margin-bottom: 25px; letter-spacing: -.12px; }
.row { display: flex; align-items: center; gap: 4px; }
.alerts .field { letter-spacing: -.15px; }
.alerts .tbtn { margin-top: 2px; }
.tables { display: grid; grid-template-columns: 779px 1fr; padding-top: 29px; }
.tables .pill { margin-bottom: 26px; }
.hs { gap: 5px; margin-bottom: 22px; }
.tbl { margin-left: 12px; margin-top: 1px; width: 450px; border: 1px solid #777; padding: 11px 10px 40px; display: grid; grid-template-columns: 99px 264px 60px; grid-template-rows: 36px 76px 53px 40px; column-gap: 2px; row-gap: 2px; color: #555; }
.tbl b { background: #318b9b; color: #e6f1f0; font: 700 16px/38px "Open Sans", sans-serif; letter-spacing: -.15px; padding-left: 9px; }
.c { border: 1.500px solid #58a0ad; display: flex; flex-direction: column; justify-content: center; padding: 0 8px; }
.c u { display: block; text-align-last: justify; }
.cursor { position: absolute; left: 378px; top: 272px; }

/* downloads */
.downloads { height: 54px; flex: none; background: #f2f1f2; border-top: 1px solid #ccc; display: flex; align-items: center; font-size: 14px; color: #444; letter-spacing: .05px; }
.dl { width: 255px; height: 40px; flex: none; border-right: 1px solid #ccc; display: flex; align-items: center; padding: 0 20px 0 11px; }
.dl:first-child { width: 248px; }
.dl > svg:last-child { color: #666; margin-top: 1px; }
.dl > svg:first-child { margin-bottom: 2px; }
.dl span { flex: 1; margin-left: 14px; line-height: 17px; }
.dl .low { padding-top: 5px; }
.dl:nth-child(n+2) > svg:first-child { margin-left: 7px; }
.dl:nth-child(4) { letter-spacing: -.03px; }
.dl:nth-child(5) > svg:first-child { margin-left: 9px; margin-right: 2px; }
.dl small { display: block; font-size: 11px; line-height: 12px; color: #777; letter-spacing: -.2px; }
.showall { width: 88px; height: 31px; flex: none; margin: 0 0 3px 128px; border: 1.500px solid #aaa; border-radius: 3px; background: #fafafa; font-weight: 600; line-height: 28px; text-align: center; letter-spacing: -.5px; }
.dlx { margin-left: 15px; color: #555; }

/* recorded taskbar */
.vtask { height: 35px; flex: none; background: #04060b; display: flex; overflow: hidden; color: #ddd; }
.vtask > div { height: 45px; display: flex; flex: none; align-items: center; justify-content: center; }
.vs { width: 43px; color: #fff; padding-right: 12px; }
.search { width: 386px; background: #f1f1f2; gap: 11px; padding: 0 17px 0 10px; font-size: 16px; color: #555; letter-spacing: -.22px; }
.search span { flex: 1; }
.vi { width: 55.200px; }
.vi:nth-child(8) { width: 51px; }
.vi.hot { width: 54px; background: #2f3035; margin: 0 1px 0 5px; }
.vtask > .vtray { width: 353px; position: relative; gap: 18px; justify-content: flex-start; padding-left: 29px; }
.vtray > :first-child { margin-right: 11px; }
.white { color: #fff; }
.vtray > .vclock { width: 61px; font-size: 14px; line-height: 20px; text-align: center; letter-spacing: -.55px; align-self: flex-start; margin: 2px 0 0 -4px; }
.mark { position: absolute; right: 18px; top: 6px; color: rgba(230, 230, 230, .5); font-size: 15px; font-weight: 600; letter-spacing: -.5px; }

/* system taskbar */
.taskbar { height: 50px; flex: none; background: linear-gradient(90deg, #d0e3e6, #dce3dd 10%, #dae3dd 14%, #cfe0e5 25%, #cfdfe5 60%, #d5dfe3); color: #111; display: flex; }
.ti { width: 62px; flex: none; display: flex; align-items: center; justify-content: center; }
.ti:nth-child(-n+4) { width: 60px; }
.ti:nth-child(5) { margin-left: 3px; }
.ti.open { background: #edf3f6; border-bottom: 3px solid #0078d7; padding-top: 3px; width: 60px; margin: 0 1px; }
.tray { flex: 1; display: flex; align-items: center; padding-left: 400px; }
.sun { margin-right: 12px; }
.deg, .haze { font-size: 18px; letter-spacing: -1px; }
.deg { width: 48px; }
.haze { width: 70px; letter-spacing: -.6px; }
.tray > svg:nth-child(n+4) { margin-right: 11.500px; }
.tray > svg:nth-child(4) { margin-right: 14px; }
.lang { width: 45px; letter-spacing: -.5px; }
.clock { width: 76px; font-size: 14px; line-height: 22px; text-align: center; letter-spacing: .1px; margin-right: 23px; }
```
